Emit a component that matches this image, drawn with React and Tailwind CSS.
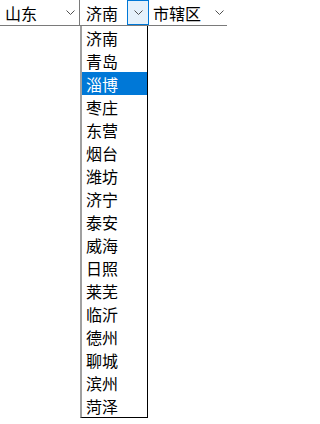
import React from "react";

const cities = ["济南","青岛","淄博","枣庄","东营","烟台","潍坊","济宁","泰安","威海","日照","莱芜","临沂","德州","聊城","滨州","菏泽"];

function Chevron({ className }) {
  return (
    <svg width="9" height="5" viewBox="0 0 9 5" className={className}>
      <path d="M0.5 0.5 L4.5 4.5 L8.5 0.5" fill="none" stroke="#505050" strokeWidth="1" />
    </svg>
  );
}

export default function App() {
  const font = { fontFamily: '"Noto Sans CJK SC", "Microsoft YaHei", sans-serif' };
  return (
    <div className="relative w-[227px] h-[424px] bg-white overflow-hidden text-[16px] text-black" style={font}>
      <div className="flex h-[26px]">
        <div className="w-[79px] h-[26px] border-b border-[#7a7a7a] flex items-center justify-between pl-[5px] pr-[4px]">
          <span className="leading-none">山东</span>
          <Chevron />
        </div>
        <div className="w-[70px] h-[26px] border-l border-b border-[#7a7a7a] flex items-center justify-between pl-[6px]">
          <span className="leading-none">济南</span>
          <div className="w-[22px] h-[25px] border border-[#0078d7] bg-[#e5f1fb] flex items-center justify-center">
            <Chevron />
          </div>
        </div>
        <div className="flex-1 h-[26px] border-b border-[#7a7a7a] flex items-center justify-between pl-[4px] pr-[3px]">
          <span className="leading-none">市辖区</span>
          <Chevron />
        </div>
      </div>
      <div className="absolute left-[80px] top-[26px] w-[68px] border-l-2 border-l-[#a0a0a0] border-r border-b border-r-black border-b-black bg-white">
        {cities.map((c) => (
          <div
            key={c}
            className={
              "h-[23px] flex items-center pl-[4px] leading-none " +
              (c === "淄博" ? "bg-[#0078d7] text-white" : "")
            }
          >
            {c}
          </div>
        ))}
      </div>
    </div>
  );
}
